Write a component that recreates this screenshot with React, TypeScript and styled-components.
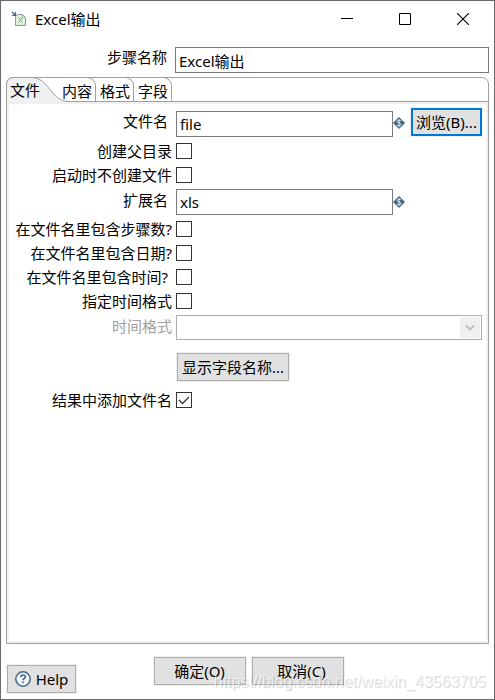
import React, { useId, useState } from "react";
import styled, { createGlobalStyle } from "styled-components";

const GlobalStyle = createGlobalStyle`
  * { box-sizing: border-box; }
  body { margin: 0; background: #fff; }
  body, button, input, select {
    font-family: "Noto Sans", "Noto Sans CJK SC", sans-serif;
    font-size: 15px;
    line-height: 20px;
    color: #000;
  }
`;

const Window = styled.main`
  position: relative;
  display: flex;
  flex-direction: column;
  min-height: 100vh;
  border: 1px solid #6b696b;
  background: #fff;
`;

const TitleBar = styled.header`
  display: flex;
  align-items: center;
  height: 36px;
  padding: 0 2px 0 10px;
`;

const Title = styled.h1`
  flex: 1;
  margin: 0 0 0 8px;
  font-size: 15px;
  font-weight: 400;
`;

const CaptionButton = styled.button`
  display: flex;
  align-items: center;
  justify-content: center;
  width: 58px;
  height: 36px;
  padding: 0;
  border: 0;
  background: transparent;
`;

const NameRow = styled.div`
  display: grid;
  grid-template-columns: 174px 1fr;
  padding: 10px 5px 4px 0;
`;

const Label = styled.label<{ $inset?: boolean; $disabled?: boolean }>`
  padding-right: ${(p) => (p.$inset ? 8 : 4)}px;
  text-align: right;
  white-space: nowrap;
  color: ${(p) => (p.$disabled ? "#a0a0a0" : "#000")};
`;

const TextInput = styled.input`
  width: 100%;
  min-width: 0;
  height: 26px;
  padding: 0 3px;
  border: 1px solid #7a7a7a;
  border-radius: 0;
  background: #fff;
  outline: 0;
`;

const Folder = styled.section`
  flex: 1;
  display: flex;
  flex-direction: column;
  margin: 0 5px;
  border: 1px solid #a0a0a0;
  border-radius: 7px 7px 0 0;
`;

const TabStrip = styled.div`
  display: flex;
  height: 24px;
  border-bottom: 1px solid #a0a0a0;
`;

const Tab = styled.button<{ $selected?: boolean }>`
  position: relative;
  z-index: ${(p) => (p.$selected ? 1 : 0)};
  width: ${(p) => (p.$selected ? 51 : 38)}px;
  height: 24px;
  margin-top: -1px;
  padding: 2px 3px 0;
  border: solid #a0a0a0;
  border-width: ${(p) => (p.$selected ? "0" : "1px 1px 0 0")};
  border-radius: 0 9px 0 0;
  background: transparent;
  text-align: ${(p) => (p.$selected ? "left" : "right")};
  white-space: nowrap;
`;

const TabShape = styled.svg`
  position: absolute;
  top: 0;
  left: -1px;
  z-index: -1;
`;

const Panel = styled.div`
  flex: 1;
  padding: 3px 4px 0 0;
  border: 2px solid #f0f0f0;
`;

const Row = styled.div<{ $height: number }>`
  display: grid;
  grid-template-columns: 167px 1fr 18px 71px;
  align-items: center;
  height: ${(p) => p.$height}px;
`;

const FieldRow = styled(Row)`
  padding: 1px 0 2px;

  ${TextInput} { align-self: end; }
  ${Label} { padding-bottom: 3px; }
`;

const Check = styled.span`
  display: grid;
  width: 16px;
  height: 16px;

  > * { grid-area: 1 / 1; }
  svg { pointer-events: none; }
`;

const CheckInput = styled.input`
  appearance: none;
  width: 16px;
  height: 16px;
  margin: 0;
  border: 1px solid #333;
  background: #fff;
`;

const Combo = styled.div`
  display: grid;
  grid-column: 2 / -1;
  height: 25px;

  > * { grid-area: 1 / 1; }
`;

const Select = styled.select`
  appearance: none;
  width: 100%;
  border: 1px solid #abadb3;
  border-radius: 0;
  background: #fff;
  opacity: 1;
`;

const ComboArrow = styled.span`
  position: relative;
  display: flex;
  align-items: center;
  justify-content: center;
  justify-self: end;
  width: 20px;
  margin: 2px;
  background: #f0f0f0;
  pointer-events: none;
`;

const PushButton = styled.button<{ $focused?: boolean; $width?: number }>`
  display: flex;
  align-items: center;
  justify-content: center;
  gap: 5px;
  width: ${(p) => (p.$width ? `${p.$width}px` : "auto")};
  height: 28px;
  padding: 0;
  border: ${(p) => (p.$focused ? "2px solid #0078d7" : "1px solid #adadad")};
  border-radius: 0;
  background: #e1e1e1;
  box-shadow: 0 0 0 1px #f0f0f0;
  white-space: pre;
`;

const BrowseButton = styled(PushButton)`
  align-self: start;
`;

const ButtonRow = styled(Row)`
  padding-top: 2px;

  ${PushButton} { margin-left: 1px; }
`;

const Footer = styled.footer`
  display: grid;
  grid-template-columns: 1fr auto 1fr;
  align-items: start;
  height: 55px;
  padding: 13px 4px 0 6px;
`;

const HelpCell = styled.div`
  padding-top: 8px;
`;

const Actions = styled.div`
  display: flex;
  gap: 6px;
`;

const Watermark = styled.span`
  position: absolute;
  right: 8px;
  bottom: 7px;
  font-family: "Liberation Sans", sans-serif;
  font-size: 16px;
  color: rgba(255, 255, 255, 0.6);
  text-shadow: 1px 1px 1px rgba(0, 0, 0, 0.18);
  pointer-events: none;
`;

const AppIcon = () => (
  <svg width="16" height="16" viewBox="0 0 16 16" fill="none" aria-hidden="true">
    <path d="M4.500 5.500l2-2h5l3 3v8h-10z" fill="#e2f2dc" stroke="#8299a8" />
    <path d="M11 3.500v3h3.500" stroke="#a3b8bb" />
    <path d="M7.500 6.500l4 5M11.500 6.500l-4 5" stroke="#7fa58b" />
    <path d="M1 1l3 3M4.500 1v3.500H1" stroke="#456580" strokeWidth="1.200" />
  </svg>
);

const VariableIcon = () => (
  <svg width="12" height="12" viewBox="0 0 12 12" fill="none" aria-hidden="true">
    <path d="M6 0l6 6-6 6-6-6z" fill="#41688a" />
    <path
      d="M8.200 3.900C7.400 3.100 4.200 2.800 4.200 4.500c0 1.700 3.800 1.100 3.800 3 0 1.700-3.200 1.500-4.200.6M6 2v8"
      stroke="#e4ebf0"
      strokeWidth="1"
    />
  </svg>
);

const HelpIcon = () => (
  <svg width="16" height="16" viewBox="0 0 16 16" fill="none" aria-hidden="true">
    <circle cx="8" cy="8" r="7.200" fill="#f4f6f8" stroke="#41688a" strokeWidth="1.500" />
    <path d="M5.700 6.200c0-3 4.600-2.900 4.600-.3C10.300 7.500 8 7.500 8 9.300" stroke="#41688a" strokeWidth="1.600" />
    <path d="M8 10.500v1.700" stroke="#41688a" strokeWidth="1.600" />
  </svg>
);

function CheckRow({ label, inset, initial = false }: { label: string; inset?: boolean; initial?: boolean }) {
  const id = useId();
  const [on, setOn] = useState(initial);
  return (
    <Row $height={24}>
      <Label htmlFor={id} $inset={inset}>{label}</Label>
      <Check>
        <CheckInput id={id} type="checkbox" checked={on} onChange={(e) => setOn(e.target.checked)} />
        {on && (
          <svg width="16" height="16" fill="none" aria-hidden="true">
            <path d="M3 8l3.500 3.500L13 5" stroke="#333" strokeWidth="1.300" />
          </svg>
        )}
      </Check>
    </Row>
  );
}

export default function App() {
  return (
    <>
      <GlobalStyle />
      <Window>
        <TitleBar>
          <AppIcon />
          <Title>Excel输出</Title>
          <CaptionButton aria-label="最小化">
            <svg width="12" height="12"><path d="M0 5.500h12" stroke="#000" /></svg>
          </CaptionButton>
          <CaptionButton aria-label="最大化">
            <svg width="12" height="12"><path d="M.5.5h11v11H.5z" fill="none" stroke="#000" /></svg>
          </CaptionButton>
          <CaptionButton aria-label="关闭">
            <svg width="12" height="12"><path d="M0 0l12 12M12 0L0 12" stroke="#000" strokeWidth="1.100" /></svg>
          </CaptionButton>
        </TitleBar>

        <NameRow>
          <Label htmlFor="step" $inset>步骤名称</Label>
          <TextInput id="step" defaultValue="Excel输出" />
        </NameRow>

        <Folder>
          <TabStrip role="tablist">
            <Tab role="tab" aria-selected="true" $selected>
              <TabShape width="64" height="26" fill="none" aria-hidden="true">
                <path d="M1 26V7Q2 1 8 1H26C44 1 44 24.500 62 24.500V25H1V26z" fill="#f0f0f0" />
                <path d="M.5 26V7.500Q1 .5 7.500.5H25C44 .5 44 24.500 63 24.500" stroke="#a0a0a0" />
              </TabShape>
              文件
            </Tab>
            <Tab role="tab" aria-selected="false">内容</Tab>
            <Tab role="tab" aria-selected="false">格式</Tab>
            <Tab role="tab" aria-selected="false">字段</Tab>
          </TabStrip>

          <Panel role="tabpanel">
            <FieldRow $height={32}>
              <Label htmlFor="file" $inset>文件名</Label>
              <TextInput id="file" defaultValue="file" />
              <VariableIcon />
              <BrowseButton $focused>浏览(B)...</BrowseButton>
            </FieldRow>
            <CheckRow label="创建父目录" />
            <CheckRow label="启动时不创建文件" />
            <FieldRow $height={30}>
              <Label htmlFor="ext" $inset>扩展名</Label>
              <TextInput id="ext" defaultValue="xls" />
              <VariableIcon />
            </FieldRow>
            <CheckRow label="在文件名里包含步骤数?" />
            <CheckRow label="在文件名里包含日期?" />
            <CheckRow label="在文件名里包含时间?" inset />
            <CheckRow label="指定时间格式" />
            <FieldRow $height={30}>
              <Label htmlFor="format" $disabled>时间格式</Label>
              <Combo>
                <Select id="format" disabled />
                <ComboArrow>
                  <svg width="10" height="8" fill="none" aria-hidden="true">
                    <path d="M1 1.500l4 4 4-4" stroke="#bfbfbf" strokeWidth="2" />
                  </svg>
                </ComboArrow>
              </Combo>
            </FieldRow>
            <ButtonRow $height={45}>
              <span />
              <PushButton $width={112}>显示字段名称...</PushButton>
            </ButtonRow>
            <CheckRow label="结果中添加文件名" initial />
          </Panel>
        </Folder>

        <Footer>
          <HelpCell>
            <PushButton $width={69}><HelpIcon />Help</PushButton>
          </HelpCell>
          <Actions>
            <PushButton $width={92}>确定(O)</PushButton>
            <PushButton $width={92}>{"  取消(C)"}</PushButton>
          </Actions>
        </Footer>
        <Watermark>https://blog.csdn.net/weixin_43563705</Watermark>
      </Window>
    </>
  );
}
